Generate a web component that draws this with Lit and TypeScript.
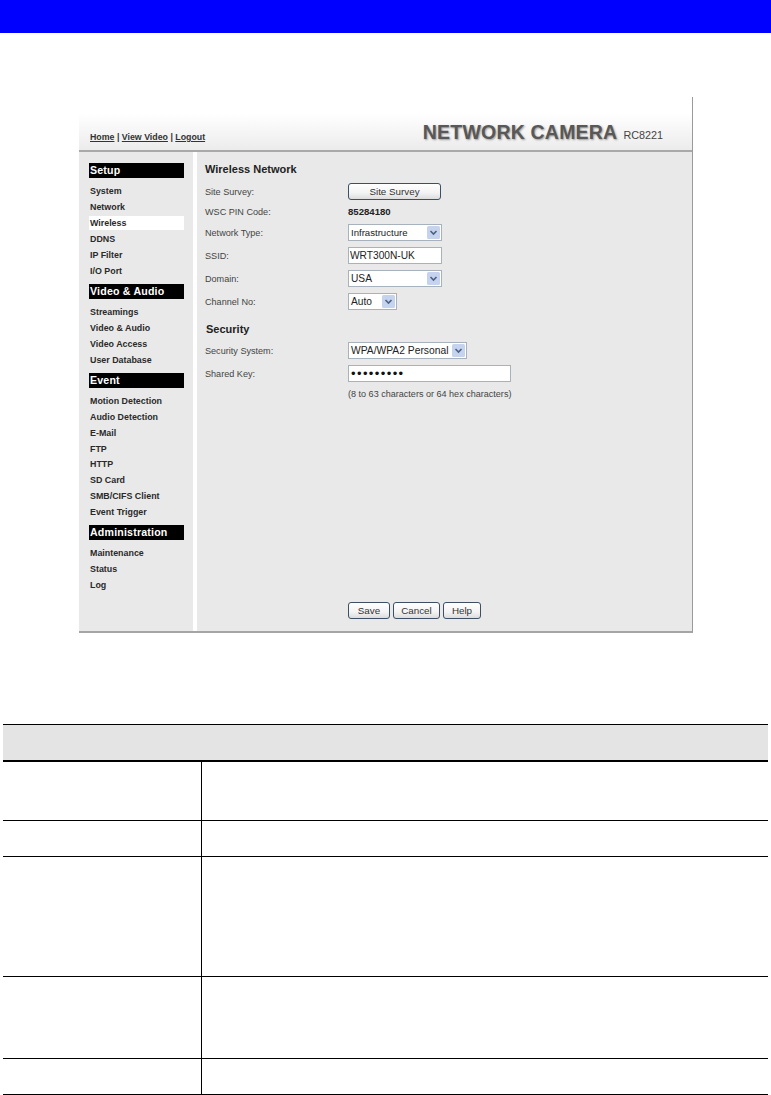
import { LitElement, html, css } from "lit";
import { customElement } from "lit/decorators.js";

const arrow = html`<svg class="arr" width="13" height="13" viewBox="0 0 13 13"><rect x="0" y="0" width="13" height="13" rx="1.5" fill="#c5d3ee"/><path d="M3.5 5 L6.5 8 L9.5 5" fill="none" stroke="#4d6185" stroke-width="1.6"/></svg>`;

const menu: { title: string; items: string[] }[] = [
  { title: "Setup", items: ["System", "Network", "Wireless", "DDNS", "IP Filter", "I/O Port"] },
  { title: "Video & Audio", items: ["Streamings", "Video & Audio", "Video Access", "User Database"] },
  { title: "Event", items: ["Motion Detection", "Audio Detection", "E-Mail", "FTP", "HTTP", "SD Card", "SMB/CIFS Client", "Event Trigger"] },
  { title: "Administration", items: ["Maintenance", "Status", "Log"] },
];

@customElement("app-root")
export class AppRoot extends LitElement {
  static styles = css`
    :host { display: block; width: 771px; height: 1095px; background: #fff; overflow: hidden; font-family: "Liberation Sans", Arial, sans-serif; color: #222; }
    .bar { height: 33px; background: #0000ff; }
    .frame { margin: 64px 0 0 79px; width: 614px; height: 536px; box-sizing: border-box; background: #e9e9e9; border-right: 1px solid #9a9a9a; border-bottom: 2px solid #a5a5a5; display: flex; flex-direction: column; }
    .head { height: 55px; flex: none; box-sizing: border-box; background: linear-gradient(#ffffff 0%, #ffffff 30%, #ececec 100%); border-bottom: 2px solid #a9a9a9; display: flex; align-items: flex-end; justify-content: space-between; padding: 0 29px 7px 11px; }
    .links { font-size: 8.8px; font-weight: bold; color: #333; line-height: 12px; }
    .links u { text-decoration: underline; }
    .brand { display: flex; align-items: baseline; gap: 6px; }
    .brand b { font-size: 19.5px; line-height: 22px; color: #585858; text-shadow: 1px 1px 2px #999; letter-spacing: 0.2px; }
    .brand span { font-size: 10.8px; color: #444; }
    .body { flex: 1; display: flex; min-height: 0; }
    .side { width: 114px; flex: none; box-sizing: border-box; padding: 11px 9px 0 10px; }
    .strip { width: 4px; flex: none; background: #fff; }
    .sec { background: #000; color: #fff; font-size: 10.6px; font-weight: bold; height: 15px; line-height: 15px; padding-left: 1px; letter-spacing: 0.2px; }
    .items { padding: 6.2px 0 4.2px; }
    .item { height: 15.9px; line-height: 15.9px; font-size: 8.9px; font-weight: bold; color: #2a2a2a; padding-left: 1px; }
    .item.on { background: #fff; height: 14px; line-height: 14px; margin: 0 0 1.9px; }
    .form { flex: 1; box-sizing: border-box; padding: 11px 0 0 8px; font-size: 9.1px; color: #444; display: flex; flex-direction: column; }
    h3 { margin: 0; font-size: 11px; line-height: 13px; font-weight: bold; color: #222; }
    .row { display: flex; align-items: center; }
    .row label { width: 143px; flex: none; }
    .ctl { box-sizing: border-box; height: 17px; background: #fff; border: 1px solid #a8b2bc; display: flex; align-items: center; justify-content: space-between; font-size: 10.2px; color: #222; padding: 0 1px 0 2px; }
    .ctl.sm { font-size: 9.6px; }
    .ctl.tight { font-size: 10.3px; padding-left: 2px; }
    .ctl.text { padding-left: 1px; }
    .btn { box-sizing: border-box; height: 17px; border: 1px solid #3c4f63; border-radius: 3px; background: linear-gradient(#ffffff, #f3f3f3 60%, #dcdcdc); display: flex; align-items: center; justify-content: center; font-size: 9.8px; color: #333; }
    .r1 { margin-top: 7px; }
    .r2 { margin-top: 4px; height: 15px; }
    .r2 b { font-size: 9.6px; color: #222; }
    .sp-3 { margin-top: 5px; }
    .sp-6 { margin-top: 6px; }
    .w94 { width: 94px; }
    .w49 { width: 49px; }
    .w119 { width: 119px; }
    .w163 { width: 163px; }
    .dots { letter-spacing: 1.4px; font-size: 13px; color: #111; }
    .sech { margin-top: 13px; padding-left: 1px; }
    .hint { margin: 7px 0 0 143px; font-size: 9.05px; color: #444; line-height: 11px; }
    .actions { margin-top: auto; margin-bottom: 12px; margin-left: 143px; display: flex; gap: 3px; }
    table { margin: 91px 0 0 3px; width: 765px; border-collapse: collapse; table-layout: fixed; }
    .c1 { width: 198px; }
    th { height: 35px; background: #e4e4e4; border-top: 1px solid #000; border-bottom: 2px solid #000; padding: 0; }
    td { border-bottom: 1px solid #000; padding: 0; }
    td:first-child { border-right: 1px solid #000; }
    .h59 { height: 59px; }
    .h36 { height: 36px; }
    .h120 { height: 120px; }
    .h82 { height: 82px; }
  `;

  render() {
    return html`
      <div class="bar"></div>
      <div class="frame">
        <div class="head">
          <div class="links"><u>Home</u> | <u>View Video</u> | <u>Logout</u></div>
          <div class="brand"><b>NETWORK CAMERA</b><span>RC8221</span></div>
        </div>
        <div class="body">
          <div class="side">
            ${menu.map(
              (m) => html`<div class="sec">${m.title}</div>
                <div class="items">
                  ${m.items.map((i) => html`<div class="item ${i === "Wireless" ? "on" : ""}">${i}</div>`)}
                </div>`
            )}
          </div>
          <div class="strip"></div>
          <div class="form">
            <h3>Wireless Network</h3>
            <div class="row r1"><label>Site Survey:</label><div class="btn" style="width:93px">Site Survey</div></div>
            <div class="row r2"><label>WSC PIN Code:</label><b>85284180</b></div>
            <div class="row sp-3"><label>Network Type:</label><div class="ctl w94 sm">Infrastructure ${arrow}</div></div>
            <div class="row sp-6"><label>SSID:</label><div class="ctl w94 text">WRT300N-UK</div></div>
            <div class="row sp-6"><label>Domain:</label><div class="ctl w94">USA ${arrow}</div></div>
            <div class="row sp-6"><label>Channel No:</label><div class="ctl w49">Auto ${arrow}</div></div>
            <h3 class="sech">Security</h3>
            <div class="row sp-6"><label>Security System:</label><div class="ctl w119 tight">WPA/WPA2 Personal ${arrow}</div></div>
            <div class="row sp-6"><label>Shared Key:</label><div class="ctl w163"><span class="dots">•••••••••</span></div></div>
            <div class="hint">(8 to 63 characters or 64 hex characters)</div>
            <div class="actions">
              <div class="btn" style="width:42px">Save</div>
              <div class="btn" style="width:47px">Cancel</div>
              <div class="btn" style="width:38px">Help</div>
            </div>
          </div>
        </div>
      </div>
      <table>
        <colgroup><col class="c1" /><col /></colgroup>
        <tr><th colspan="2"></th></tr>
        <tr class="h59"><td></td><td></td></tr>
        <tr class="h36"><td></td><td></td></tr>
        <tr class="h120"><td></td><td></td></tr>
        <tr class="h82"><td></td><td></td></tr>
        <tr class="h36"><td></td><td></td></tr>
      </table>
    `;
  }
}
